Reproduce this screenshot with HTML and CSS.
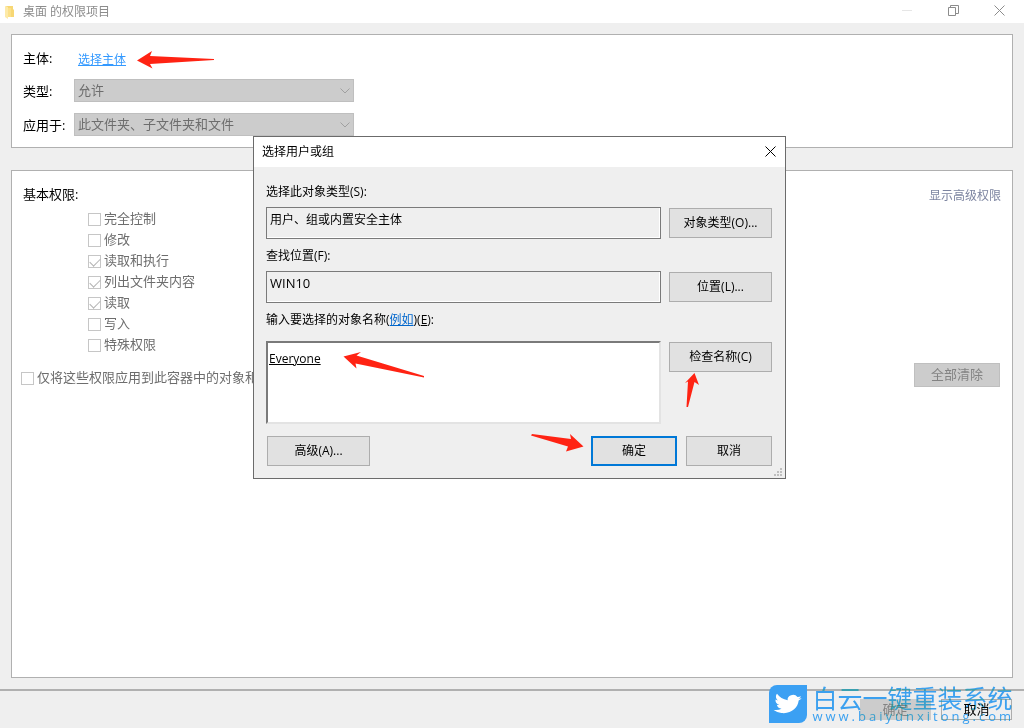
FILE: index.html
```html
<!DOCTYPE html>
<html lang="zh-CN">
<head>
  <meta charset="utf-8">
  <meta name="viewport" content="width=device-width, initial-scale=1">
  <title>桌面 的权限项目</title>
  <link rel="stylesheet" href="styles.css">
</head>
<body>
  <header class="titlebar">
    <svg class="folder" width="12" height="16" viewBox="0 0 12 16">
      <path d="M2 2h7v3l1 1v7H4z" fill="#f7d774"/>
      <path d="M1 2l3 1v12l-3-2z" fill="#fdeaa8"/>
      <path d="M4 4h3v9H4z" fill="#fbe08a"/>
    </svg>
    <h1>桌面 的权限项目</h1>
    <div class="controls">
      <button type="button" aria-label="最小化" disabled>
        <svg width="11" height="11" viewBox="0 0 11 11"><path d="M0 5.5h10" stroke="#e6e6e6"/></svg>
      </button>
      <button type="button" aria-label="还原">
        <svg width="11" height="11" viewBox="0 0 11 11" fill="none" stroke="#8c8c8c"><path d="M.5 2.5h7v8h-7zM2.5 2.5v-2h8v8h-3"/></svg>
      </button>
      <button type="button" aria-label="关闭">
        <svg width="11" height="11" viewBox="0 0 11 11"><path d="M.5.5l10 10M10.5.5l-10 10" stroke="#8c8c8c"/></svg>
      </button>
    </div>
  </header>

  <main>
    <section class="panel principal">
      <span>主体:</span>
      <div class="pick"><a href="#">选择主体</a></div>
      <label for="type">类型:</label>
      <div class="select">
        <select id="type" disabled><option>允许</option></select>
        <svg width="10" height="6" viewBox="0 0 10 6"><path d="M.5.5L5 5 9.5.5" fill="none" stroke="#a0a0a0"/></svg>
      </div>
      <label for="scope">应用于:</label>
      <div class="select">
        <select id="scope" disabled><option>此文件夹、子文件夹和文件</option></select>
        <svg width="10" height="6" viewBox="0 0 10 6"><path d="M.5.5L5 5 9.5.5" fill="none" stroke="#a0a0a0"/></svg>
      </div>
    </section>

    <section class="panel permissions">
      <div class="panel-head">
        <h2>基本权限:</h2>
        <a class="advanced" href="#">显示高级权限</a>
      </div>
      <ul>
        <li><label class="check"><input type="checkbox" disabled>完全控制</label></li>
        <li><label class="check"><input type="checkbox" disabled>修改</label></li>
        <li><label class="check"><input type="checkbox" checked disabled>读取和执行</label></li>
        <li><label class="check"><input type="checkbox" checked disabled>列出文件夹内容</label></li>
        <li><label class="check"><input type="checkbox" checked disabled>读取</label></li>
        <li><label class="check"><input type="checkbox" disabled>写入</label></li>
        <li><label class="check"><input type="checkbox" disabled>特殊权限</label></li>
      </ul>
      <div class="panel-foot">
        <label class="check"><input type="checkbox" disabled>仅将这些权限应用到此容器中的对象和</label>
        <button class="clear" type="button" disabled>全部清除</button>
      </div>
    </section>
  </main>

  <footer>
    <button type="button" disabled>确定</button>
    <button type="button">取消</button>
  </footer>

  <div class="dialog" role="dialog" aria-labelledby="dialog-title">
    <div class="dialog-bar">
      <h2 id="dialog-title">选择用户或组</h2>
      <button type="button" aria-label="关闭">
        <svg width="11" height="11" viewBox="0 0 11 11"><path d="M.5.5l10 10M10.5.5l-10 10" stroke="#000"/></svg>
      </button>
    </div>
    <form class="dialog-body">
      <div class="caption"><label for="object-type">选择此对象类型(S):</label></div>
      <div class="row">
        <input id="object-type" type="text" value="用户、组或内置安全主体" readonly>
        <button class="btn" type="button">对象类型(O)...</button>
      </div>
      <div class="caption"><label for="location">查找位置(F):</label></div>
      <div class="row">
        <input class="location" id="location" type="text" value="WIN10" readonly>
        <button class="btn" type="button">位置(L)...</button>
      </div>
      <div class="caption names-caption"><label for="names">输入要选择的对象名称</label>(<a href="#">例如</a>)(<u>E</u>):</div>
      <div class="row">
        <textarea id="names" spellcheck="false">Everyone</textarea>
        <button class="btn" type="button">检查名称(C)</button>
      </div>
      <div class="actions">
        <button class="btn" type="button">高级(A)...</button>
        <button class="btn short default" type="submit">确定</button>
        <button class="btn short" type="button">取消</button>
      </div>
    </form>
    <svg class="grip" width="8" height="8" viewBox="0 0 8 8" fill="#bfbfbf">
      <path d="M6 0h2v2H6zM3 3h2v2H3zM6 3h2v2H6zM0 6h2v2H0zM3 6h2v2H3zM6 6h2v2H6z"/>
    </svg>
  </div>

  <!-- red pointers -->
  <svg class="arrows" width="1024" height="728" viewBox="0 0 1024 728" fill="#ff2313">
    <path d="M137 60.500L152 51l-2 5 64 3v1l-64 4 2.500 4.500z"/>
    <path d="M343.500 356.500L361 352l-4.500 3.500 67.500 20.500v1.500L355.500 363.500l1 5z"/>
    <path d="M694.500 373l4.500 12-4.500-3-6.500 25h-1.500l1.500-25.500-3 1.500z"/>
    <path d="M583.500 446.500L570 434l1 5-39-5-1 1.500 37 11-2 5z"/>
  </svg>

  <div class="watermark">
    <svg width="38" height="38" viewBox="0 0 38 38">
      <path d="M8 0h30v30a8 8 0 0 1-8 8H0V8a8 8 0 0 1 8-8z" fill="#3ba0f3"/>
      <path transform="translate(5 7) rotate(7 14 12) scale(1.120 1)" fill="#fff" d="M23.953 4.570a10 10 0 0 1-2.825.775 4.958 4.958 0 0 0 2.163-2.723c-.951.555-2.005.959-3.127 1.184a4.920 4.920 0 0 0-8.384 4.482C7.690 8.095 4.067 6.130 1.640 3.162a4.822 4.822 0 0 0-.666 2.475c0 1.710.870 3.213 2.188 4.096a4.904 4.904 0 0 1-2.228-.616v.060a4.923 4.923 0 0 0 3.946 4.827 4.996 4.996 0 0 1-2.212.085 4.936 4.936 0 0 0 4.604 3.417 9.867 9.867 0 0 1-6.102 2.105c-.390 0-.779-.023-1.170-.067a13.995 13.995 0 0 0 7.557 2.209c9.053 0 13.998-7.496 13.998-13.985 0-.210 0-.420-.015-.630A9.935 9.935 0 0 0 24 4.590z"/>
    </svg>
    <div class="brand">
      <strong>白云一键重装系统</strong>
      <span>www.baiyunxitong.com</span>
    </div>
  </div>
</body>
</html>
```
FILE: styles.css
```css
* {
  box-sizing: border-box;
  margin: 0;
  padding: 0;
}
body {
  position: relative;
  display: flex;
  flex-direction: column;
  min-height: 100vh;
  background: #efefef;
  color: #000;
  font-family: "Open Sans", "Noto Sans CJK SC", sans-serif;
  font-size: 13px;
  line-height: 20px;
}
button, input, select, textarea {
  font: inherit;
  color: inherit;
  border-radius: 0;
}
h1, h2 {
  font-size: inherit;
  font-weight: normal;
}

/* Window title bar */
.titlebar {
  display: flex;
  align-items: center;
  height: 23px;
  padding: 0 2px 0 4px;
  background: #fff;
}
.titlebar h1 {
  flex: 1;
  margin-left: 7px;
  color: #8c8c8c;
  font-size: 12px;
}
.controls {
  display: flex;
}
.controls button {
  display: flex;
  align-items: center;
  justify-content: center;
  width: 46px;
  height: 22px;
  padding-bottom: 2px;
  border: 0;
  background: none;
}

main {
  flex: 1;
  display: flex;
  flex-direction: column;
  gap: 22px;
  padding: 11px;
}
.panel {
  border: 1px solid #b0b0b0;
  background: #fff;
}

.principal {
  display: grid;
  grid-template-columns: 51px 280px;
  grid-template-rows: 20px 23px 23px;
  row-gap: 11px;
  align-items: center;
  padding: 13px 11px 11px;
}
.pick {
  padding: 3px 4px 0;
  font-size: 12px;
}
.pick a {
  color: #3399ff;
}
.select {
  position: relative;
}
.select select {
  display: block;
  width: 100%;
  height: 23px;
  padding: 0 0 2px 3px;
  appearance: none;
  border: 1px solid #bfbfbf;
  background: #ccc;
  color: #6d6d6d;
  opacity: 1;
}
.select svg {
  position: absolute;
  top: 9px;
  right: 4px;
}

.permissions {
  flex: 1;
  padding: 13px 11px;
}
.panel-head {
  display: flex;
  justify-content: space-between;
  margin-bottom: 1px;
}
.advanced {
  padding-top: 2px;
  color: #7c84a0;
  font-size: 12px;
  text-decoration: none;
}
.permissions ul {
  padding-left: 65px;
  list-style: none;
}
.check {
  display: flex;
  align-items: center;
  gap: 3px;
  height: 21px;
  color: #6d6d6d;
}
.check input {
  position: relative;
  width: 13px;
  height: 13px;
  margin-top: 4px;
  appearance: none;
  border: 1px solid #c6c6c6;
  background: #fff;
}
.check input:checked::after {
  content: "";
  position: absolute;
  top: 0;
  left: 3px;
  width: 5px;
  height: 9px;
  border: solid #b4b4b4;
  border-width: 0 1px 1px 0;
  transform: rotate(45deg);
}
.panel-foot {
  display: flex;
  align-items: flex-end;
  justify-content: space-between;
  margin: 9px 1px 0 -2px;
}
.clear {
  width: 86px;
  height: 24px;
  padding-bottom: 2px;
  border: 1px solid #bfbfbf;
  background: #ccc;
  color: #838383;
}

footer {
  display: flex;
  justify-content: flex-end;
  gap: 10px;
  padding: 8px 12px;
  border-top: 2px solid #b0b0b0;
}
footer button {
  width: 71px;
  height: 21px;
  border: 1px solid #adadad;
  background: #efefef;
  line-height: 19px;
}
footer button:disabled {
  border-color: #ccc;
  background: #ccc;
  color: #838383;
}

/* Dialog floats over the permissions window */
.dialog {
  position: absolute;
  top: 136px;
  left: 253px;
  width: 533px;
  border: 1px solid #6b6b6b;
  background: #efefef;
  font-size: 12px;
}
.dialog-bar {
  display: flex;
  align-items: center;
  justify-content: space-between;
  height: 30px;
  padding: 0 4px 0 8px;
  background: #fff;
}
.dialog-bar button {
  display: flex;
  align-items: center;
  justify-content: center;
  width: 22px;
  height: 22px;
  padding-bottom: 2px;
  border: 0;
  background: none;
}
.dialog-body {
  padding: 15px 13px 12px 12px;
}
.caption {
  margin-bottom: 5px;
}
.caption a {
  color: #0066cc;
}
.names-caption {
  margin-bottom: 11px;
}
.row {
  display: flex;
  align-items: flex-start;
  gap: 8px;
  margin-bottom: 7px;
}
.row input {
  flex: 1;
  min-width: 0;
  height: 32px;
  padding: 0 3px 9px;
  border: 1px solid #7a7a7a;
  background: #efefef;
  box-shadow: inset -1px -1px #fff;
}
.row .location {
  font-size: 13px;
}
.row textarea {
  flex: 1;
  min-width: 0;
  height: 83px;
  padding: 6px 1px;
  border: 2px solid;
  border-color: #7a7a7a #e3e3e3 #e3e3e3 #7a7a7a;
  background: #fff;
  resize: none;
  text-decoration: underline;
}
.btn {
  width: 103px;
  height: 30px;
  border: 1px solid #adadad;
  background: #e1e1e1;
}
.row .btn {
  margin-top: 1px;
}
.actions {
  display: flex;
  gap: 9px;
  margin-top: 12px;
  padding-left: 1px;
}
.actions .btn:first-child {
  margin-right: auto;
}
.short {
  width: 86px;
}
.default {
  border: 2px solid #0078d7;
}
.grip {
  position: absolute;
  right: 3px;
  bottom: 2px;
}

.arrows {
  position: absolute;
  top: 0;
  left: 0;
  pointer-events: none;
}

.watermark {
  position: absolute;
  right: 10px;
  bottom: 5px;
  display: flex;
  gap: 5px;
  color: #3ba0f3;
  pointer-events: none;
}
.brand {
  mix-blend-mode: darken;
}
.brand strong {
  display: block;
  font-size: 25px;
  font-weight: normal;
  line-height: 26px;
}
.brand span {
  display: block;
  font-size: 13px;
  line-height: 10px;
  letter-spacing: 3px;
}
```
